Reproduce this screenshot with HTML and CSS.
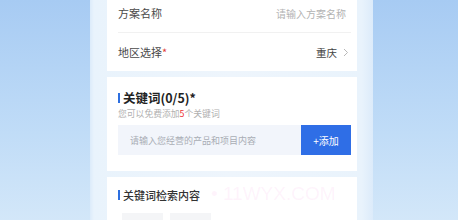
FILE: index.html
```html
<!DOCTYPE html>
<html lang="zh-CN">
<head>
<meta charset="utf-8">
<title>关键词</title>
<link rel="stylesheet" href="styles.css">
</head>
<body>
<div class="stage">
  <div class="side"></div>
  <div class="phone">
    <div class="card form-card">
      <div class="row row-first">
        <span class="label">方案名称</span>
        <span class="placeholder">请输入方案名称</span>
      </div>
      <div class="row">
        <span class="label">地区选择<span class="req">*</span></span>
        <span class="value">重庆
          <svg class="chev" width="6" height="9" viewBox="0 0 6 9"><path d="M1 1l3.5 3.5L1 8" fill="none" stroke="#b8b8b8" stroke-width="1"/></svg>
        </span>
      </div>
    </div>
    <div class="card kw-card">
      <div class="title"><span class="bar"></span>关键词(0/5)*</div>
      <div class="sub">您可以免费添加<span class="red">5</span>个关键词</div>
      <div class="input-row">
        <div class="input">请输入您经营的产品和项目内容</div>
        <div class="btn">+添加</div>
      </div>
    </div>
    <div class="card res-card">
      <div class="title title-light"><span class="bar"></span>关键词检索内容</div>
      <div class="chips">
        <span class="chip"></span>
        <span class="chip"></span>
      </div>
      <div class="watermark">• 11WYX.COM</div>
    </div>
  </div>
  <div class="side"></div>
</div>
</body>
</html>
```
FILE: styles.css
```css
html, body {
  margin: 0;
  padding: 0;
}
body {
  width: 458px;
  height: 220px;
  overflow: hidden;
  font-family: "Noto Sans CJK SC", "Noto Sans", sans-serif;
  background: linear-gradient(180deg, #a7cbf3 0%, #c0dcf7 60%, #d3e7f9 100%);
}
.stage {
  display: flex;
  height: 220px;
}
.side {
  flex: 1;
}
.stage .side:first-child {
  flex: 0 0 90px;
}
.phone {
  flex: 0 0 283px;
  box-sizing: border-box;
  padding: 0 16px 0 17px;
  background: linear-gradient(90deg, #dcebfa 0px, #e9f3fc 4px, #eef5fc 50%, #e9f3fc 96%, #dcebfa 100%);
  display: flex;
  flex-direction: column;
  gap: 6px;
  overflow: hidden;
}
.card {
  background: #fff;
  position: relative;
  flex-shrink: 0;
}
.form-card {
  margin-top: -6px;
  padding: 0 6px 0 11px;
}
.row {
  height: 38px;
  display: flex;
  align-items: center;
  justify-content: space-between;
  border-top: 1px solid #f1f1f1;
}
.row-first {
  border-top: none;
}
.label {
  font-size: 11px;
  color: #4a4a4a;
}
.req {
  color: #e0403a;
}
.placeholder {
  font-size: 10px;
  color: #b3b3b3;
  margin-right: 5px;
}
.value {
  font-size: 10.5px;
  color: #444;
  display: flex;
  align-items: center;
  gap: 6px;
  margin-right: 2px;
}
.kw-card {
  height: 94px;
  padding: 12px 6px 0 11px;
  box-sizing: border-box;
}
.title {
  display: flex;
  align-items: center;
  font-size: 12.5px;
  font-weight: 700;
  color: #222;
  height: 17px;
}
.title-light {
  font-size: 11px;
  font-weight: 500;
  color: #333;
}
.bar {
  width: 2px;
  height: 10px;
  background: #2d6fe0;
  margin-right: 3px;
}
.sub {
  font-size: 8.8px;
  color: #b0b0b0;
  margin-top: 1px;
  height: 13px;
  line-height: 13px;
}
.red {
  color: #e33;
}
.input-row {
  display: flex;
  margin-top: 5px;
  height: 30px;
}
.input {
  flex: 1;
  background: #f2f5fb;
  font-size: 9px;
  color: #a9adb5;
  display: flex;
  align-items: center;
  padding-left: 12px;
}
.btn {
  width: 50px;
  background: #2f6ee6;
  color: #fff;
  font-size: 10px;
  display: flex;
  align-items: center;
  justify-content: center;
}
.res-card {
  flex: 1 0 auto;
  padding: 9px 6px 0 11px;
}
.chips {
  display: flex;
  gap: 7px;
  margin-top: 10px;
  padding-left: 4px;
}
.chip {
  width: 41px;
  height: 14px;
  background: #f4f5f7;
}
.watermark {
  position: absolute;
  left: 104px;
  top: 6px;
  font-family: "Liberation Sans", sans-serif;
  font-size: 19px;
  color: rgba(248, 160, 230, 0.13);
  white-space: nowrap;
  pointer-events: none;
}
```
